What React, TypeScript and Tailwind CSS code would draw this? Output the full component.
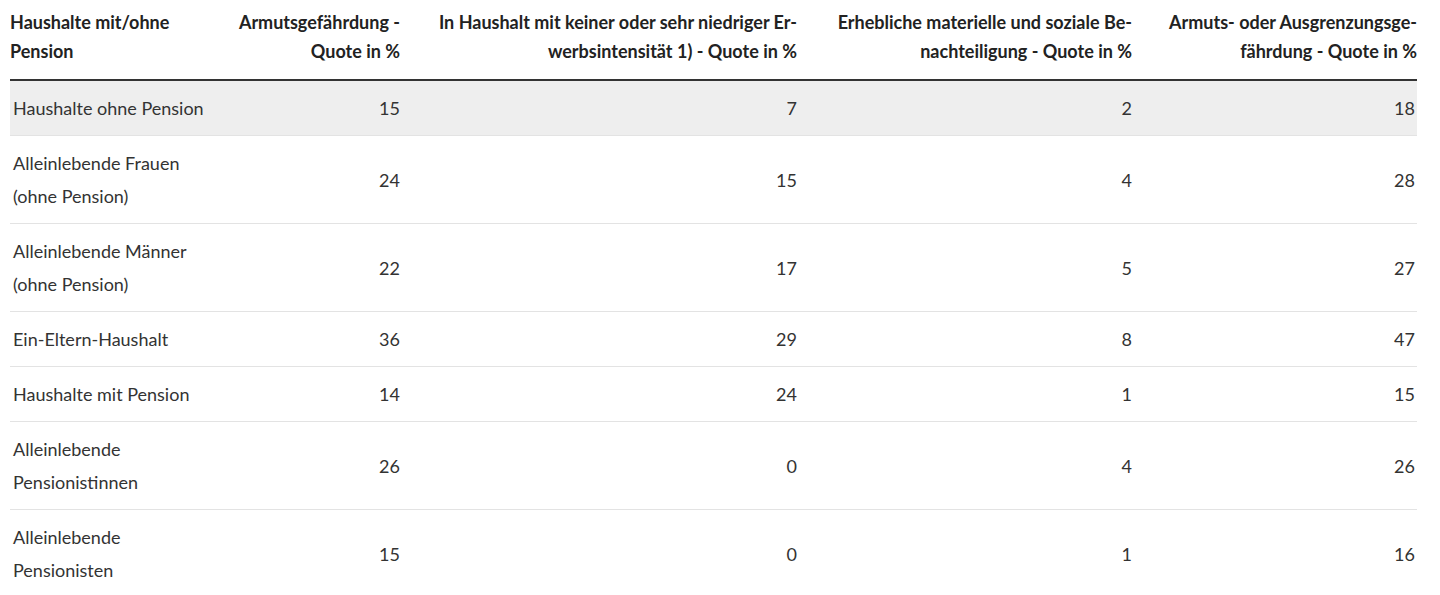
import React from "react";

const rows: [React.ReactNode, string, string, string, string][] = [
  ["Haushalte ohne Pension", "15", "7", "2", "18"],
  [<>Alleinlebende Frauen<br />(ohne Pension)</>, "24", "15", "4", "28"],
  [<>Alleinlebende Männer<br />(ohne Pension)</>, "22", "17", "5", "27"],
  ["Ein-Eltern-Haushalt", "36", "29", "8", "47"],
  ["Haushalte mit Pension", "14", "24", "1", "15"],
  [<>Alleinlebende<br />Pensionistinnen</>, "26", "0", "4", "26"],
  [<>Alleinlebende<br />Pensionisten</>, "15", "0", "1", "16"],
];

export default function App() {
  return (
    <div className="bg-white w-[1440px] h-[595px] overflow-hidden" style={{ fontFamily: "Lato, 'Liberation Sans', sans-serif" }}>
      <table className="ml-[10px] w-[1407px] table-fixed border-collapse text-[18px] text-[#333]">
        <colgroup>
          <col className="w-[216px]" />
          <col className="w-[174px]" />
          <col className="w-[397px]" />
          <col className="w-[335px]" />
          <col className="w-[285px]" />
        </colgroup>
        <thead>
          <tr className="border-b-2 border-[#333]">
            <th className="pt-[8px] pb-[13px] text-left align-top font-bold leading-[29px] text-[#222]">Haushalte mit/ohne<br />Pension</th>
            <th className="pt-[8px] pb-[13px] text-right align-top font-bold leading-[29px] text-[#222]">Armutsgefährdung -<br />Quote in %</th>
            <th className="pt-[8px] pb-[13px] text-right align-top font-bold leading-[29px] text-[#222]">In Haushalt mit keiner oder sehr niedriger Er-<br />werbsintensität 1) - Quote in %</th>
            <th className="pt-[8px] pb-[13px] text-right align-top font-bold leading-[29px] text-[#222]">Erhebliche materielle und soziale Be-<br />nachteiligung - Quote in %</th>
            <th className="pt-[8px] pb-[13px] text-right align-top font-bold leading-[29px] text-[#222]">Armuts- oder Ausgrenzungsge-<br />fährdung - Quote in %</th>
          </tr>
        </thead>
        <tbody>
          {rows.map((r, i) => (
            <tr key={i} className={`border-b border-[#e3e3e3] ${i === 0 ? "bg-[#eeeeee]" : ""}`}>
              <td className="pt-[11px] pb-[10px] pl-[3px] leading-[33px] align-middle">{r[0]}</td>
              <td className="pt-[11px] pb-[10px] text-right leading-[33px] align-middle">{r[1]}</td>
              <td className="pt-[11px] pb-[10px] text-right leading-[33px] align-middle">{r[2]}</td>
              <td className="pt-[11px] pb-[10px] text-right leading-[33px] align-middle">{r[3]}</td>
              <td className="pt-[11px] pb-[10px] pr-[2px] text-right leading-[33px] align-middle">{r[4]}</td>
            </tr>
          ))}
        </tbody>
      </table>
    </div>
  );
}
